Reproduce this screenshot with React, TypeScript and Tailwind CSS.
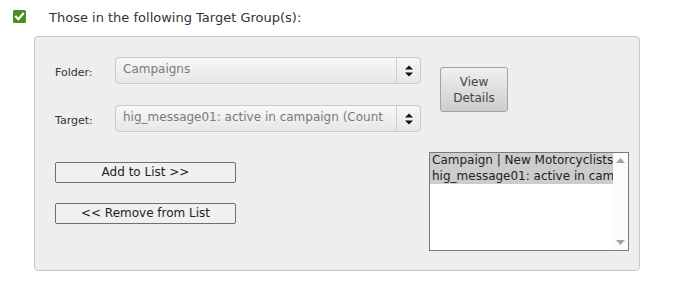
import React from "react";

function SelectBox({ value }: { value: string }) {
  return (
    <div className="flex w-[306px] h-[27px] rounded-[4px] border border-[#c9c9c9] bg-gradient-to-b from-[#f7f7f7] to-[#e7e7e7] overflow-hidden">
      <div className="flex-1 min-w-0 pl-[7px] text-[12px] leading-[22px] text-[#7a7a7a] whitespace-nowrap overflow-hidden">
        {value}
      </div>
      <div className="w-[24px] h-full border-l border-[#cfcfcf] flex items-center justify-center">
        <svg width="10" height="14" viewBox="0 0 10 14">
          <path d="M1 5.5 L5 1.5 L9 5.5 Z" fill="#111" />
          <path d="M1 8.5 L5 12.5 L9 8.5 Z" fill="#111" />
        </svg>
      </div>
    </div>
  );
}

function Row({ label, value, className = "" }: { label: string; value: string; className?: string }) {
  return (
    <div className={"flex items-start " + className}>
      <div className="w-[60px] h-[27px] pt-[2px] text-[11px] leading-[27px] text-[#333]">{label}</div>
      <SelectBox value={value} />
    </div>
  );
}

export default function App() {
  return (
    <div className="w-[674px] h-[285px] bg-white font-['DejaVu_Sans',sans-serif] text-[#333]">
      <div className="h-[36px] flex items-start">
        <div className="ml-[13px] mt-[10px] w-[13px] h-[13px]">
          <svg width="13" height="13" viewBox="0 0 13 13">
            <rect x="0" y="0" width="13" height="13" rx="1.5" fill="#4d8c1d" />
            <path d="M3 6.8 L5.4 9.2 L10 3.8" stroke="#fff" strokeWidth="2.2" fill="none" strokeLinecap="square" />
          </svg>
        </div>
        <div className="ml-[23px] mt-[9px] text-[13px] leading-[18px] text-[#333]">
          Those in the following Target Group(s):
        </div>
      </div>
      <div className="ml-[34px] w-[606px] h-[235px] border border-[#c6c6c6] rounded-[4px] bg-[#eeeeee] pt-[20px] pl-[20px]">
        <div className="flex items-start">
          <div className="flex flex-col">
            <Row label="Folder:" value="Campaigns" />
            <Row label="Target:" value="hig_message01: active in campaign (Count" className="mt-[21px]" />
          </div>
          <button className="ml-[19px] mt-[10px] w-[68px] h-[45px] rounded-[3px] border border-[#a3a3a3] bg-gradient-to-b from-[#f0f0f0] to-[#cdcdcd] text-[12px] leading-[16px] text-[#444] flex flex-col items-center justify-center">
            <span>View</span>
            <span>Details</span>
          </button>
        </div>
        <div className="flex items-start mt-[20px]">
          <div className="flex flex-col mt-[10px]">
            <button className="w-[181px] h-[21px] rounded-[2px] border border-[#6f6f6f] bg-[#f0f0f0] text-[12px] leading-[19px] text-[#222]">
              Add to List &gt;&gt;
            </button>
            <button className="mt-[20px] w-[181px] h-[21px] rounded-[2px] border border-[#6f6f6f] bg-[#f0f0f0] text-[12px] leading-[19px] text-[#222]">
              &lt;&lt; Remove from List
            </button>
          </div>
          <div className="ml-[193px] w-[200px] h-[99px] border border-[#7a7a7a] bg-white flex">
            <div className="flex-1 min-w-0 text-[12px] leading-[15.5px] text-[#222]">
              <div className="bg-[#cccccc] whitespace-nowrap overflow-hidden pl-[2px]">Campaign | New Motorcyclists</div>
              <div className="bg-[#cccccc] whitespace-nowrap overflow-hidden pl-[2px]">hig_message01: active in campaign (Count Sum)</div>
            </div>
            <div className="w-[15px] h-full bg-[#fbfbfb] flex flex-col items-center justify-between py-[5px]">
              <svg width="9" height="5" viewBox="0 0 9 5">
                <path d="M0 5 L4.5 0 L9 5 Z" fill="#a3a3a3" />
              </svg>
              <svg width="9" height="5" viewBox="0 0 9 5">
                <path d="M0 0 L4.5 5 L9 0 Z" fill="#a3a3a3" />
              </svg>
            </div>
          </div>
        </div>
      </div>
    </div>
  );
}
